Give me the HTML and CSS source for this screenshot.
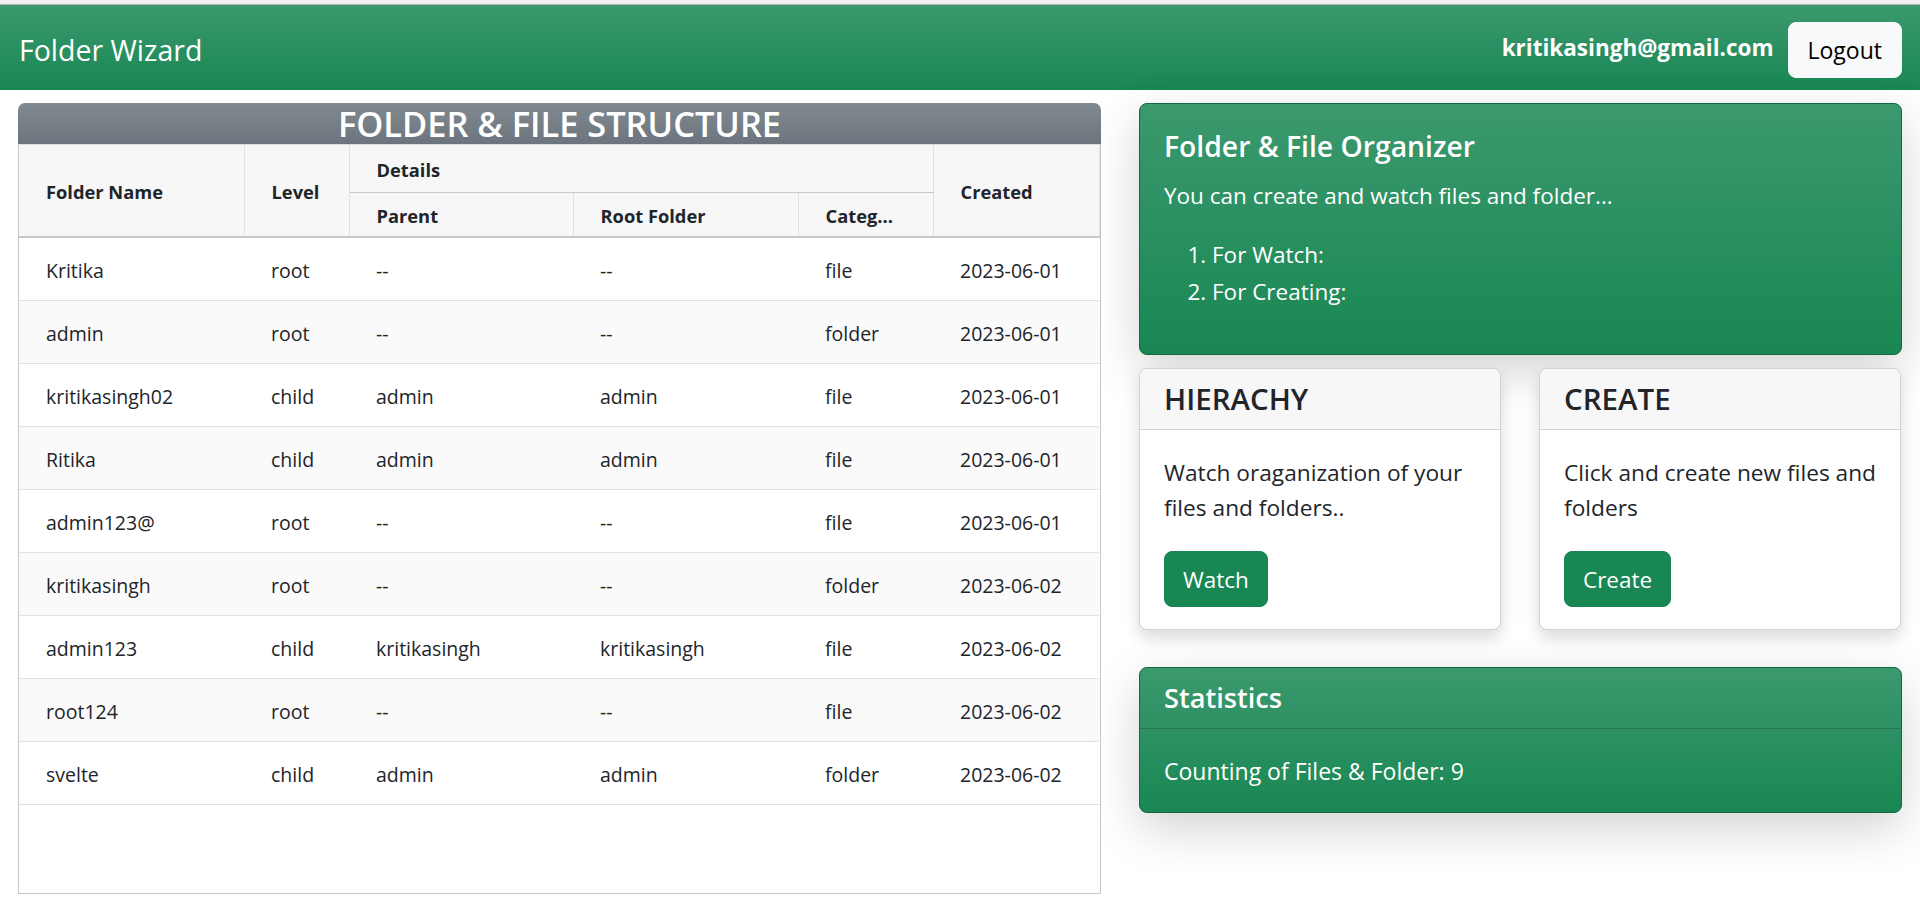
FILE: index.html
```html
<!DOCTYPE html>
<html lang="en">
<head>
<meta charset="utf-8">
<title>Folder Wizard</title>
<link rel="stylesheet" href="styles.css">
</head>
<body>
<div class="topstrip"></div>
<nav class="navbar">
  <span class="brand">Folder Wizard</span>
  <div class="nav-right">
    <span class="email">kritikasingh@gmail.com</span>
    <button class="btn-logout">Logout</button>
  </div>
</nav>
<main class="main">
  <section class="left">
    <h3 class="struct-title">FOLDER &amp; FILE STRUCTURE</h3>
    <div class="table-box">
      <table class="tbl">
        <colgroup>
          <col class="c-name"><col class="c-level"><col class="c-parent"><col class="c-root"><col class="c-cat"><col class="c-created">
        </colgroup>
        <thead>
          <tr class="hr1">
            <th rowspan="2">Folder Name</th>
            <th rowspan="2">Level</th>
            <th colspan="3" class="details">Details</th>
            <th rowspan="2">Created</th>
          </tr>
          <tr class="hr2">
            <th>Parent</th>
            <th>Root Folder</th>
            <th>Categ...</th>
          </tr>
        </thead>
        <tbody>
          <tr><td>Kritika</td><td>root</td><td>--</td><td>--</td><td>file</td><td>2023-06-01</td></tr>
          <tr><td>admin</td><td>root</td><td>--</td><td>--</td><td>folder</td><td>2023-06-01</td></tr>
          <tr><td>kritikasingh02</td><td>child</td><td>admin</td><td>admin</td><td>file</td><td>2023-06-01</td></tr>
          <tr><td>Ritika</td><td>child</td><td>admin</td><td>admin</td><td>file</td><td>2023-06-01</td></tr>
          <tr><td>admin123@</td><td>root</td><td>--</td><td>--</td><td>file</td><td>2023-06-01</td></tr>
          <tr><td>kritikasingh</td><td>root</td><td>--</td><td>--</td><td>folder</td><td>2023-06-02</td></tr>
          <tr><td>admin123</td><td>child</td><td>kritikasingh</td><td>kritikasingh</td><td>file</td><td>2023-06-02</td></tr>
          <tr><td>root124</td><td>root</td><td>--</td><td>--</td><td>file</td><td>2023-06-02</td></tr>
          <tr><td>svelte</td><td>child</td><td>admin</td><td>admin</td><td>folder</td><td>2023-06-02</td></tr>
        </tbody>
      </table>
    </div>
  </section>
  <aside class="right">
    <div class="card card-green organizer">
      <h4 class="org-title">Folder &amp; File Organizer</h4>
      <p class="org-text">You can create and watch files and folder...</p>
      <ol class="steps">
        <li>For Watch:</li>
        <li>For Creating:</li>
      </ol>
    </div>
    <div class="duo">
      <div class="card card-plain">
        <div class="plain-header">HIERACHY</div>
        <div class="plain-body">
          <p class="plain-text">Watch oraganization of your files and folders..</p>
          <button class="btn-green">Watch</button>
        </div>
      </div>
      <div class="card card-plain">
        <div class="plain-header">CREATE</div>
        <div class="plain-body">
          <p class="plain-text">Click and create new files and folders</p>
          <button class="btn-green">Create</button>
        </div>
      </div>
    </div>
    <div class="card card-green stats">
      <div class="stats-header">Statistics</div>
      <div class="stats-body">Counting of Files &amp; Folder: 9</div>
    </div>
  </aside>
</main>
</body>
</html>
```

FILE: styles.css
```css
* { box-sizing: border-box; }
html, body { margin: 0; padding: 0; }
body {
  font-family: "Open Sans", "Noto Sans", sans-serif;
  color: #212529;
  background: #fff;
  height: 906px;
  overflow: hidden;
}
.topstrip {
  height: 5px;
  background: #f1f1f1;
  border-bottom: 1px solid #b4b4b4;
}
.navbar {
  height: 85px;
  display: flex;
  align-items: center;
  justify-content: space-between;
  padding: 0 18px 0 19px;
  background: #198754 linear-gradient(180deg, rgba(255,255,255,.15), rgba(255,255,255,0));
  color: #fff;
}
.brand { font-size: 28.5px; padding-top: 4px; }
.nav-right { display: flex; align-items: center; gap: 14px; padding-top: 5px; }
.email { font-size: 22.5px; font-weight: 700; margin-top: -6px; }
.btn-logout {
  height: 56px;
  padding: 0 19px;
  font-family: inherit;
  font-size: 23px;
  color: #000;
  background: #f8f9fa;
  border: 1px solid #f8f9fa;
  border-radius: 8px;
}
.main {
  display: flex;
  gap: 38px;
  padding: 13px 18px 0 18px;
}
.left { width: 1083px; flex: none; }
.struct-title {
  margin: 0;
  height: 41px;
  line-height: 41px;
  text-align: center;
  font-size: 34.4px;
  font-weight: 600;
  color: #fff;
  background: #6c757d linear-gradient(180deg, rgba(255,255,255,.15), rgba(255,255,255,0));
  border-radius: 7px 7px 0 0;
}
.table-box {
  height: 750px;
  border: 1px solid #c6c6cb;
  border-top: 1px solid #dcdcdf;
  overflow: hidden;
}
.tbl {
  width: 1080px;
  border-collapse: collapse;
  table-layout: fixed;
}
.c-name { width: 225px; }
.c-level { width: 105px; }
.c-parent { width: 224px; }
.c-root { width: 225px; }
.c-cat { width: 135px; }
.c-created { width: 166px; }
.tbl th {
  background: #f7f7f7;
  font-size: 18.3px;
  font-weight: 700;
  text-align: left;
  padding: 2px 27px 0;
  vertical-align: middle;
  border-right: 1px solid #dfe2e6;
  white-space: nowrap;
}
.hr1 th { height: 47px; }
.hr2 th { height: 45px; }
.tbl th.details { border-bottom: 1px solid #c8c9cf; }
.tbl thead tr.hr2 th, .tbl thead th[rowspan] { border-bottom: 2px solid #c7c8cd; }
.tbl td {
  height: 63px;
  padding: 4px 27px 0;
  font-size: 19.5px;
  border-bottom: 1px solid #dee2e6;
  white-space: nowrap;
}
.tbl tbody tr:nth-child(even) td { background: #fafafb; }
.right { width: 763px; flex: none; display: flex; flex-direction: column; }
.card { border-radius: 8px; }
.card-green {
  background: #198754 linear-gradient(180deg, rgba(255,255,255,.15), rgba(255,255,255,0));
  border: 1px solid #15673f;
  color: #fff;
  box-shadow: 0 16px 48px rgba(0,0,0,.175);
}
.organizer { height: 252px; padding: 24px 24px; }
.org-title { margin: 0; font-size: 28.3px; font-weight: 600; line-height: 37px; }
.org-text { margin: 14px 0 0; font-size: 22.5px; line-height: 33px; }
.steps { margin: 24px 0 0; padding-left: 48px; font-size: 22.5px; }
.steps li { line-height: 37px; }
.duo { display: flex; gap: 38px; margin-top: 13px; }
.card-plain {
  width: 362px;
  height: 262px;
  border: 1px solid #d2d2d2;
  background: #fff;
  box-shadow: 0 8px 16px rgba(0,0,0,.15);
  overflow: hidden;
}
.plain-header {
  height: 61px;
  padding: 0 24px;
  background: #f7f7f7;
  border-bottom: 1px solid #d2d2d2;
  font-size: 29.5px;
  font-weight: 600;
  line-height: 60px;
}
.plain-body { padding: 25px 24px 24px; }
.plain-text { margin: 0 0 26px; font-size: 22.7px; line-height: 35px; }
.btn-green {
  height: 56px;
  padding: 0 18px;
  font-family: inherit;
  font-size: 22.5px;
  color: #fff;
  background: #198754;
  border: 1px solid #198754;
  border-radius: 8px;
}
.stats { margin-top: 37px; height: 146px; }
.stats-header {
  height: 61px;
  padding: 0 24px;
  font-size: 27.2px;
  font-weight: 600;
  line-height: 60px;
  border-bottom: 1px solid rgba(0,0,0,.175);
}
.stats-body { padding: 0 24px; font-size: 23px; line-height: 84px; }
```
